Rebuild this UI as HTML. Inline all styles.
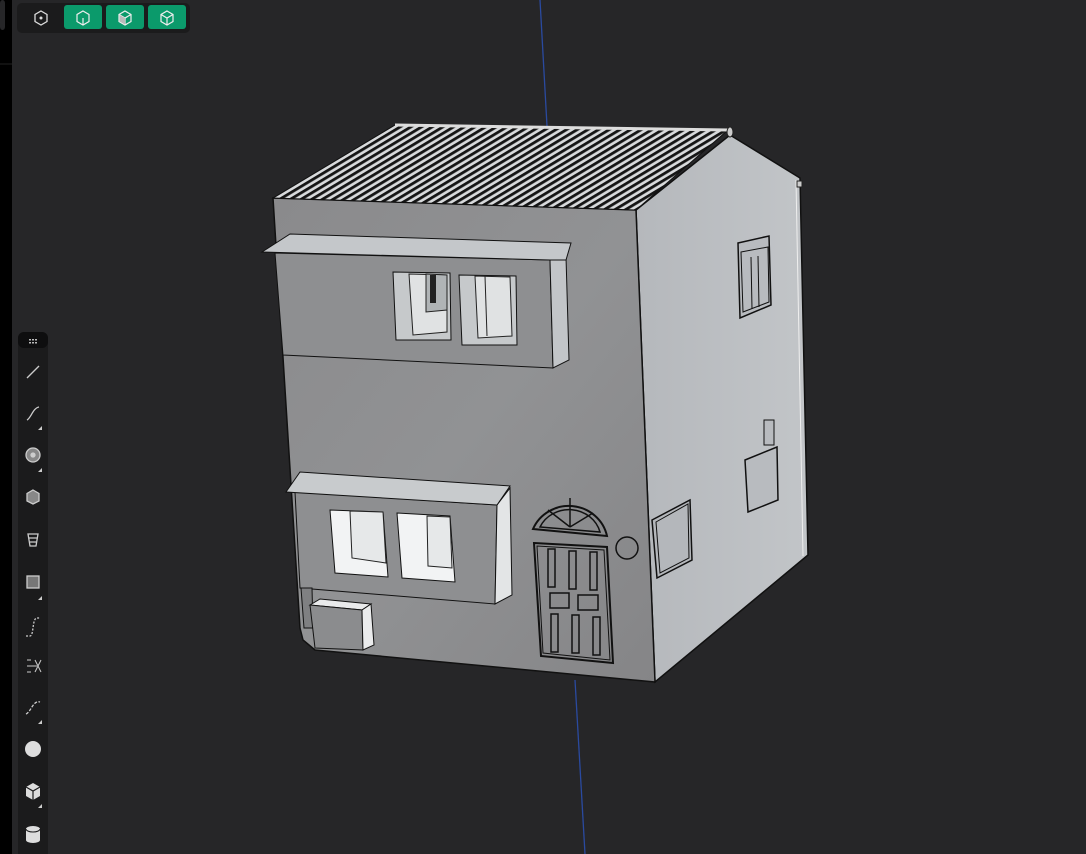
<!DOCTYPE html>
<html><head><style>
html,body{margin:0;padding:0;width:1086px;height:854px;overflow:hidden;background:#262628;font-family:"Liberation Sans",sans-serif}
</style></head><body>
<svg width="1086" height="854" viewBox="0 0 1086 854" xmlns="http://www.w3.org/2000/svg" style="position:absolute;left:0;top:0">
<defs>
<pattern id="stripes" width="5.5" height="8" patternUnits="userSpaceOnUse" patternTransform="rotate(59)">
<rect width="5.5" height="8" fill="#d8dadc"/><rect width="2.8" height="8" fill="#151515"/>
</pattern>
<linearGradient id="front" x1="0" y1="0" x2="1" y2="1">
<stop offset="0" stop-color="#8a8a8c"/><stop offset="0.5" stop-color="#919294"/><stop offset="1" stop-color="#858587"/>
</linearGradient>
<linearGradient id="right" x1="0" y1="0" x2="1" y2="0">
<stop offset="0" stop-color="#b5b8bc"/><stop offset="1" stop-color="#c2c5c8"/>
</linearGradient>
</defs>
<rect x="0" y="0" width="12" height="854" fill="#000"/>
<rect x="0" y="0" width="5" height="30" rx="3" fill="#262628"/>
<line x1="0" y1="64" x2="12" y2="64" stroke="#222"/>
<line x1="540" y1="0" x2="547" y2="126" stroke="#2a4aa0" stroke-width="1.3"/>
<line x1="575" y1="680" x2="585" y2="854" stroke="#2a4aa0" stroke-width="1.3"/>
<polygon points="636,210 730,135 800,178 808,555 655,682" fill="url(#right)" stroke="#111" stroke-width="1.5"/>
<line x1="796" y1="180" x2="803" y2="556" stroke="#eee" stroke-width="1"/>
<rect x="797" y="181" width="5" height="6" fill="#ccc" stroke="#222"/>
<polygon points="273,198 636,210 655,682 315,650 303,640 300,628" fill="url(#front)" stroke="#111" stroke-width="1.5"/>
<polygon points="273,198 395,125 728,130 636,210" fill="url(#stripes)" stroke="#111" stroke-width="1"/>
<line x1="395" y1="125" x2="728" y2="130" stroke="#ddd" stroke-width="3"/>
<ellipse cx="730" cy="132" rx="3" ry="5" fill="#ccc" stroke="#222"/>
<polygon points="275,253 550,260 553,368 283,355" fill="#8e8f91" stroke="#111" stroke-width="1"/>
<polygon points="550,260 566,257 569,360 553,368" fill="#c2c5c8" stroke="#111" stroke-width="1"/>
<polygon points="262,252 290,234 571,243 566,260 550,260" fill="#c4c7ca" stroke="#111" stroke-width="1"/>
<polygon points="393,272 450,273 451,340 396,340" fill="#c6c9cb" stroke="#111"/>
<polygon points="409,274 447,275 447,332 413,335" fill="#e0e2e3" stroke="#222"/>
<polygon points="426,274 447,275 447,310 426,312" fill="#b0b4b6" stroke="#222"/>
<rect x="430" y="275" width="6" height="28" fill="#222"/>
<polygon points="459,275 516,276 517,345 462,345" fill="#c6c9cb" stroke="#111"/>
<polygon points="475,276 510,277 512,336 478,338" fill="#e0e2e3" stroke="#222"/>
<line x1="485" y1="276" x2="487" y2="336" stroke="#222"/>
<polygon points="295,492 497,505 495,604 300,588" fill="#8e8f91" stroke="#111" stroke-width="1"/>
<polygon points="497,505 510,488 512,595 495,604" fill="#e3e5e6" stroke="#111" stroke-width="1"/>
<polygon points="286,492 300,472 510,486 497,505" fill="#c8cbcd" stroke="#111" stroke-width="1"/>
<polygon points="330,510 383,512 388,577 335,573" fill="#f2f3f4" stroke="#111"/>
<polygon points="350,511 383,512 386,563 352,558" fill="#e6e8e9" stroke="#222"/>
<polygon points="397,513 450,516 455,582 402,578" fill="#f2f3f4" stroke="#111"/>
<polygon points="427,516 450,517 452,568 428,566" fill="#e6e8e9" stroke="#222"/>
<polygon points="301,588 312,588 313,628 304,628" fill="#7f8082" stroke="#111"/>
<polygon points="310,605 320,599 371,604 362,610" fill="#e9eaeb" stroke="#111"/>
<polygon points="310,605 362,610 363,650 315,648" fill="#8b8c8e" stroke="#111"/>
<polygon points="362,610 371,604 374,645 363,650" fill="#eaebec" stroke="#111"/>
<path d="M533,529 A39,38 0 0 1 607,536 Z" fill="none" stroke="#111" stroke-width="2"/>
<path d="M540,527 A32,30 0 0 1 600,532 Z M570,498 L570,527 M548,510 L570,527 M593,513 L570,527" fill="none" stroke="#111" stroke-width="1.5"/>
<polygon points="534,543 607,547 613,663 541,656" fill="none" stroke="#111" stroke-width="2"/>
<polygon points="537,546 604,550 610,660 543,653" fill="none" stroke="#111" stroke-width="1"/>
<g fill="none" stroke="#111" stroke-width="1.5">
<rect x="548" y="549" width="7" height="38"/><rect x="569" y="551" width="7" height="38"/><rect x="590" y="552" width="7" height="38"/>
<rect x="550" y="593" width="19" height="15"/><rect x="578" y="595" width="20" height="15"/>
<rect x="551" y="614" width="7" height="38"/><rect x="572" y="615" width="7" height="38"/><rect x="593" y="617" width="7" height="38"/>
</g>
<circle cx="627" cy="548" r="11" fill="none" stroke="#111" stroke-width="1.5"/>
<polygon points="652,520 690,500 692,560 657,578" fill="#b4b7bb" stroke="#111" stroke-width="1.5"/>
<polygon points="656,522 688,504 689,558 660,573" fill="none" stroke="#111"/>
<polygon points="745,460 777,447 778,500 748,512" fill="#b8bbbf" stroke="#111" stroke-width="1.5"/>
<rect x="764" y="420" width="10" height="25" fill="#b8bbbf" stroke="#111"/>
<polygon points="738,243 769,236 771,305 740,318" fill="#b8bbbf" stroke="#111" stroke-width="1.5"/>
<polygon points="741,252 768,247 769,302 743,312" fill="none" stroke="#111"/>
<line x1="751" y1="257" x2="752" y2="309" stroke="#111"/><line x1="758" y1="256" x2="759" y2="307" stroke="#111"/>
<rect x="17" y="3" width="173" height="30" rx="5" fill="#1b1b1c"/>
<polygon points="41,11 47,14.5 47,21.5 41,25 35,21.5 35,14.5" fill="none" stroke="#ddd" stroke-width="1.3"/>
<circle cx="41" cy="18" r="1.5" fill="#ddd"/>
<rect x="64" y="5" width="38" height="24" rx="3" fill="#0b9a6b"/>
<rect x="106" y="5" width="38" height="24" rx="3" fill="#0b9a6b"/>
<rect x="148" y="5" width="38" height="24" rx="3" fill="#0b9a6b"/>
<g fill="none" stroke="#eee" stroke-width="1.2">
<polygon points="83,11 89,14.5 89,21.5 83,25 77,21.5 77,14.5"/><line x1="83" y1="18" x2="83" y2="25"/>
<polygon points="125,11 131,14.5 131,21.5 125,25 119,21.5 119,14.5"/><path d="M119,14.5 L125,18 L131,14.5 M125,18 V25"/>
<polygon points="167,11 173,14.5 173,21.5 167,25 161,21.5 161,14.5"/><path d="M161,14.5 L167,18 L173,14.5 M167,18 V25"/>
</g>
<polygon points="119.5,15 125,18 125,24.5 119.5,21.3" fill="#bbb"/>
<rect x="18" y="332" width="30" height="530" rx="6" fill="#1b1b1c"/>
<rect x="18" y="332" width="30" height="16" rx="6" fill="#0e0e0f"/>
<g fill="#bbb"><rect x="29" y="339" width="2" height="1.5"/><rect x="32" y="339" width="2" height="1.5"/><rect x="35" y="339" width="2" height="1.5"/>
<rect x="29" y="342" width="2" height="1.5"/><rect x="32" y="342" width="2" height="1.5"/><rect x="35" y="342" width="2" height="1.5"/></g>
<g stroke="#ccc" fill="none" stroke-width="1.3">
<line x1="27" y1="378" x2="39" y2="366"/>
<path d="M27,420 C31,418 33,408 39,407"/>
<circle cx="33" cy="455" r="7" fill="#888"/><circle cx="33" cy="455" r="2" fill="#ccc"/>
<polygon points="33,490 39,493.5 39,501 33,504 27,501 27,493.5" fill="#888"/>
<path d="M28,534 H38 L36,546 H30 Z M29,538 H37 M30,542 H36"/>
<rect x="27" y="576" width="12" height="12" fill="#777"/>
<path d="M26,636 H30 C34,636 32,618 37,618 H40" stroke-dasharray="2 1.5"/>
<path d="M27,660 h4 M27,666 h10 M27,672 h4 M35,660 L41,672 M41,660 L35,672" stroke-width="1"/>
<path d="M26,714 C31,712 33,700 40,702" stroke-dasharray="3 1.5"/>
</g>
<circle cx="33" cy="749" r="8" fill="#ddd"/>
<polygon points="33,783 40,787 40,796 33,800 26,796 26,787" fill="#ddd"/>
<path d="M26,787 L33,791 L40,787 M33,791 V800" stroke="#1b1b1c" stroke-width="1.2" fill="none"/>
<path d="M26,829 a7,3 0 0 1 14,0 v11 a7,3 0 0 1 -14,0 Z" fill="#ddd"/>
<path d="M26,829 a7,3 0 0 0 14,0" stroke="#1b1b1c" fill="none"/>
<g fill="#ccc">
<polygon points="42,430 42,426 38,430"/><polygon points="42,472 42,468 38,472"/><polygon points="42,600 42,596 38,600"/>
<polygon points="42,724 42,720 38,724"/><polygon points="42,808 42,804 38,808"/>
</g>
</svg>
</body></html>
